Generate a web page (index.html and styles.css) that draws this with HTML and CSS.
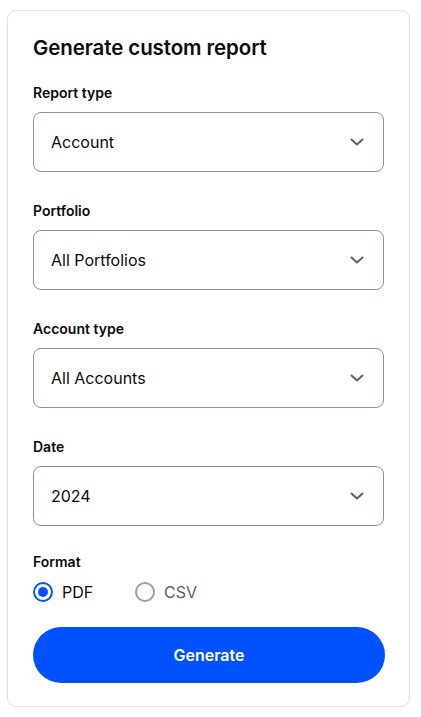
FILE: index.html
```html
<!DOCTYPE html>
<html lang="en">
<head>
<meta charset="utf-8">
<title>Generate custom report</title>
<link rel="stylesheet" href="styles.css">
</head>
<body>
<div class="card">
  <h1 class="title">Generate custom report</h1>
  <div class="field">
    <div class="label">Report type</div>
    <div class="select"><span>Account</span><svg class="chev" width="14" height="8" viewBox="0 0 14 8"><path d="M1.5 1.5L7 6.5L12.5 1.5" fill="none" stroke="#5b616e" stroke-width="2" stroke-linecap="round" stroke-linejoin="round"/></svg></div>
  </div>
  <div class="field">
    <div class="label">Portfolio</div>
    <div class="select"><span>All Portfolios</span><svg class="chev" width="14" height="8" viewBox="0 0 14 8"><path d="M1.5 1.5L7 6.5L12.5 1.5" fill="none" stroke="#5b616e" stroke-width="2" stroke-linecap="round" stroke-linejoin="round"/></svg></div>
  </div>
  <div class="field">
    <div class="label">Account type</div>
    <div class="select"><span>All Accounts</span><svg class="chev" width="14" height="8" viewBox="0 0 14 8"><path d="M1.5 1.5L7 6.5L12.5 1.5" fill="none" stroke="#5b616e" stroke-width="2" stroke-linecap="round" stroke-linejoin="round"/></svg></div>
  </div>
  <div class="field">
    <div class="label">Date</div>
    <div class="select"><span>2024</span><svg class="chev" width="14" height="8" viewBox="0 0 14 8"><path d="M1.5 1.5L7 6.5L12.5 1.5" fill="none" stroke="#5b616e" stroke-width="2" stroke-linecap="round" stroke-linejoin="round"/></svg></div>
  </div>
  <div class="format">
    <div class="label">Format</div>
    <div class="radios">
      <div class="radio on"><span class="dot"></span><span class="rtext">PDF</span></div>
      <div class="radio off"><span class="dot"></span><span class="rtext">CSV</span></div>
    </div>
  </div>
  <button class="btn">Generate</button>
</div>
</body>
</html>
```
FILE: styles.css
```css
* { box-sizing: border-box; }
body {
  margin: 0;
  background: #ffffff;
  font-family: Inter, "Noto Sans", sans-serif;
  color: #0a0b0d;
}
.card {
  margin: 10px 0 0 7px;
  width: 403px;
  height: 697px;
  border: 1px solid #dee0e3;
  border-radius: 9px;
  padding: 24px 25px 0 25px;
  display: flex;
  flex-direction: column;
}
.title {
  margin: 0;
  font-size: 20.5px;
  line-height: 26px;
  font-weight: 600;
  letter-spacing: -0.1px;
}
.field {
  display: flex;
  flex-direction: column;
  margin-top: 22px;
}
.field + .field { margin-top: 29px; }
.label {
  font-size: 14px;
  line-height: 20px;
  font-weight: 600;
}
.select {
  margin-top: 9px;
  height: 60px;
  border: 1px solid #8a919e;
  border-radius: 8px;
  display: flex;
  align-items: center;
  justify-content: space-between;
  padding: 0 19px 0 17px;
  font-size: 16px;
}
.chev { display: block; }
.format { margin-top: 26px; }
.radios {
  display: flex;
  margin-top: 8px;
  height: 24px;
  align-items: center;
}
.radio {
  display: flex;
  align-items: center;
  font-size: 16px;
}
.radio.on { width: 102px; }
.dot {
  width: 20px;
  height: 20px;
  border-radius: 50%;
  margin-right: 9px;
  position: relative;
}
.on .dot { border: 2px solid #0052ff; }
.on .dot::after {
  content: "";
  position: absolute;
  left: 3px; top: 3px;
  width: 10px; height: 10px;
  border-radius: 50%;
  background: #0052ff;
}
.off .dot { border: 2px solid #9a9fa8; }
.off .rtext { color: #5b616e; }
.btn {
  margin-top: 23px;
  height: 56px;
  width: 352px;
  border: none;
  border-radius: 28px;
  background: #0052ff;
  color: #ffffff;
  font-family: Inter, "Noto Sans", sans-serif;
  font-size: 16px;
  font-weight: 600;
}
```
